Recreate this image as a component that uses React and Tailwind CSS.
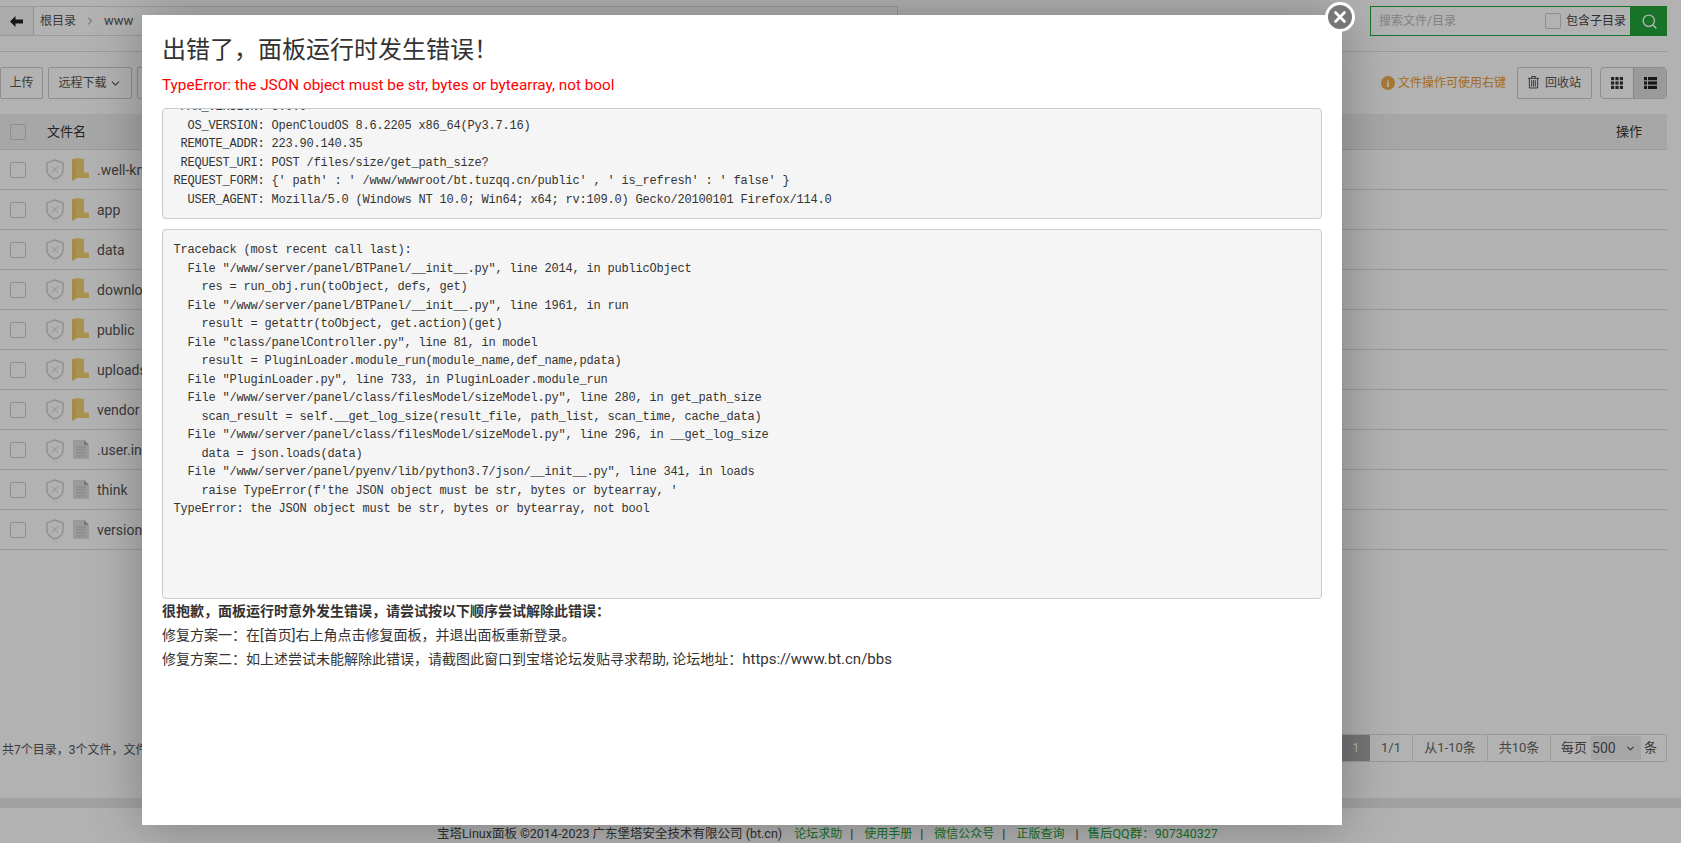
import { Search, ChevronDown, ChevronRight, X } from "lucide-react";

const files = [
  { name: ".well-known", dir: true },
  { name: "app", dir: true },
  { name: "data", dir: true },
  { name: "download", dir: true },
  { name: "public", dir: true },
  { name: "uploads", dir: true },
  { name: "vendor", dir: true },
  { name: ".user.ini", dir: false },
  { name: "think", dir: false },
  { name: "version", dir: false },
];

const envLines = [
  " PAN_VERSION: 8.0.0",
  "  OS_VERSION: OpenCloudOS 8.6.2205 x86_64(Py3.7.16)",
  " REMOTE_ADDR: 223.90.140.35",
  " REQUEST_URI: POST /files/size/get_path_size?",
  "REQUEST_FORM: {' path' : ' /www/wwwroot/bt.tuzqq.cn/public' , ' is_refresh' : ' false' }",
  "  USER_AGENT: Mozilla/5.0 (Windows NT 10.0; Win64; x64; rv:109.0) Gecko/20100101 Firefox/114.0",
];

const traceLines = [
  "Traceback (most recent call last):",
  '  File "/www/server/panel/BTPanel/__init__.py", line 2014, in publicObject',
  "    res = run_obj.run(toObject, defs, get)",
  '  File "/www/server/panel/BTPanel/__init__.py", line 1961, in run',
  "    result = getattr(toObject, get.action)(get)",
  '  File "class/panelController.py", line 81, in model',
  "    result = PluginLoader.module_run(module_name,def_name,pdata)",
  '  File "PluginLoader.py", line 733, in PluginLoader.module_run',
  '  File "/www/server/panel/class/filesModel/sizeModel.py", line 280, in get_path_size',
  "    scan_result = self.__get_log_size(result_file, path_list, scan_time, cache_data)",
  '  File "/www/server/panel/class/filesModel/sizeModel.py", line 296, in __get_log_size',
  "    data = json.loads(data)",
  '  File "/www/server/panel/pyenv/lib/python3.7/json/__init__.py", line 341, in loads',
  "    raise TypeError(f'the JSON object must be str, bytes or bytearray, '",
  "TypeError: the JSON object must be str, bytes or bytearray, not bool",
];

const ShieldIcon = () => (
  <svg width="18" height="21" viewBox="0 0 18 21" fill="none" stroke="#cfcfcf" className="shrink-0">
    <path d="M9 1 L17 4 V11 C17 15.5 13 18.5 9 20 C5 18.5 1 15.5 1 11 V4 Z" strokeWidth="1.5" />
    <path d="M6 7.5 L12 13.5 M12 7.5 L6 13.5" strokeWidth="1" />
  </svg>
);

const FolderIcon = () => (
  <svg width="17" height="24" viewBox="0 0 17 24" className="shrink-0">
    <path d="M0 1 H9 L11 3 V19 H0 Z" fill="#e2bf62" />
    <path d="M4 0 L12 1 V14 L17 15 V20 H5 L0 23 V2 Z" fill="#f3d271" />
    <path d="M0 2 L4 4 V20 L0 23 Z" fill="#e9c766" />
  </svg>
);

const DocIcon = () => (
  <svg width="16" height="21" viewBox="0 0 16 21" className="shrink-0">
    <path d="M0 1 H11 L16 6 V20 H0 Z" fill="#dedede" />
    <path d="M11 1 L16 6 H11 Z" fill="#a8a8a8" />
    <path d="M3 8 H13 M3 11 H13 M3 14 H13 M3 17 H13" stroke="#bdbdbd" strokeWidth="1" />
  </svg>
);

const Checkbox = () => (
  <span className="block w-4 h-4 border border-[#ccc] rounded-[2px] bg-transparent shrink-0" />
);

const FileRow = ({ file }) => (
  <div className="flex items-center h-10 border-b border-[#ddd] pl-[10px] text-[14px] text-[#555]">
    <Checkbox />
    <span className="ml-5 flex"><ShieldIcon /></span>
    <span className="ml-[8px] w-[17px] flex justify-center">
      {file.dir ? <FolderIcon /> : <DocIcon />}
    </span>
    <span className="ml-[8px] pt-[1px]">{file.name}</span>
  </div>
);

const GridIcon = () => (
  <svg width="12" height="12" viewBox="0 0 12 12" fill="#333">
    {[0, 4.4, 8.8].map((y) =>
      [0, 4.4, 8.8].map((x) => <rect key={`${x}-${y}`} x={x} y={y} width="3.2" height="3.2" />)
    )}
  </svg>
);

const ListIcon = () => (
  <svg width="13" height="12" viewBox="0 0 13 12" fill="#222">
    {[0, 4.4, 8.8].map((y) => (
      <g key={y}>
        <rect x="0" y={y} width="3" height="3.2" />
        <rect x="4" y={y} width="9" height="3.2" />
      </g>
    ))}
  </svg>
);

const TrashIcon = () => (
  <svg width="11" height="14" viewBox="0 0 12 14" fill="none" stroke="#444" strokeWidth="1" className="-mt-[3px]">
    <path d="M0 3 H12 M4 3 V1 H8 V3 M1.5 3 V13.5 H10.5 V3 M4 5 V12 M6 5 V12 M8 5 V12" />
  </svg>
);

const App = () => {
  return (
    <div className="relative w-[1681px] h-[843px] overflow-hidden bg-white font-['Roboto','Noto_Sans_CJK_SC',sans-serif]">
      {/* File panel behind the dialog */}
      <div className="flex flex-col h-full bg-white">
        <div className="pr-[14px] pt-[6px]">
          <div className="flex justify-between h-[30px]">
            <div className="flex w-[898px] border border-[#ddd] border-l-0 h-[30px] text-[12px] text-[#555]">
              <span className="w-[34px] flex items-center justify-center border-r border-[#ccc] bg-[#f5f5f5]">
                <svg width="13" height="11" viewBox="0 0 13 11" fill="#222">
                  <path d="M0 5.5 L5.5 0 V3.5 H13 V7.5 H5.5 V11 Z" />
                </svg>
              </span>
              <span className="ml-[6px] flex items-center">根目录</span>
              <ChevronRight className="w-[12px] h-[12px] my-auto mx-[8px]" strokeWidth={1.5} />
              <span className="flex items-center text-[13px]">www</span>
            </div>
            <div className="flex w-[297px] h-[30px]">
              <div className="flex-1 flex items-center border border-[#20a53a] pl-2">
                <span className="flex-1 text-[12px] text-[#bbb]">搜索文件/目录</span>
                <Checkbox />
                <span className="ml-[5px] mr-[4px] text-[12px] text-[#444]">包含子目录</span>
              </div>
              <span className="w-[36px] bg-[#20a53a] flex items-center justify-center">
                <Search className="w-[17px] h-[17px] text-white" strokeWidth={2} />
              </span>
            </div>
          </div>
          <div className="mt-[15px] border-b border-[#ddd]" />
          <div className="flex justify-between mt-[15px] h-[32px] text-[12px] text-[#555]">
            <div className="flex gap-[5px]">
              <span className="w-[43px] flex items-center justify-center border border-[#ccc] rounded-[2px]">上传</span>
              <span className="w-[84px] flex items-center justify-center gap-[2px] border border-[#ccc] rounded-[2px]">
                远程下载
                <ChevronDown className="w-[13px] h-[13px]" />
              </span>
              <span className="w-[60px] border border-[#ccc] rounded-[2px]" />
            </div>
            <div className="flex items-center">
              <span className="w-[14px] h-[14px] rounded-full bg-[#f0ad4e] text-white text-[11px] leading-[14px] font-bold text-center font-['Liberation_Serif',serif]">i</span>
              <span className="ml-[3px] text-[#ec9a2e] text-[12px]">文件操作可使用右键</span>
              <span className="ml-[11px] w-[75px] h-[32px] flex items-center justify-center gap-[6px] border border-[#ccc] rounded-[2px]">
                <TrashIcon />
                回收站
              </span>
              <div className="ml-[8px] flex h-[32px] w-[67px] border border-[#ccc] rounded-[4px] overflow-hidden">
                <span className="flex-1 flex items-center justify-center"><GridIcon /></span>
                <span className="flex-1 flex items-center justify-center bg-[#ddd] border-l border-[#bbb]"><ListIcon /></span>
              </div>
            </div>
          </div>
          <div className="mt-[15px]">
            <div className="flex items-center h-[36px] bg-[#efefef] border-b border-[#ddd] pl-[10px] pr-[25px] text-[13px] text-[#333]">
              <Checkbox />
              <span className="ml-[21px] flex-1">文件名</span>
              <span>操作</span>
            </div>
            {files.map((file) => (
              <FileRow key={file.name} file={file} />
            ))}
          </div>
          <div className="flex justify-between items-center mt-[184px] h-[28px] text-[12px] text-[#555]">
            <span className="pl-[2px] pt-[3px]">共7个目录，3个文件，文件大小:计算</span>
            <div className="flex h-[28px] border border-[#ddd] text-[13px] text-[#666]">
              <span className="w-[28px] flex items-center justify-center bg-[#aaa] text-white">1</span>
              <span className="w-[43px] flex items-center justify-center border-r border-[#ddd]">1/1</span>
              <span className="w-[75px] flex items-center justify-center border-r border-[#ddd]">从1-10条</span>
              <span className="w-[63px] flex items-center justify-center border-r border-[#ddd]">共10条</span>
              <span className="w-[115px] flex items-center pl-[10px] text-[#555]">
                每页
                <span className="ml-[4px] w-[50px] h-[24px] flex items-center justify-between px-[1px] bg-[#eee] text-[14px]">
                  500
                  <ChevronDown className="w-[11px] h-[11px] mr-[4px]" strokeWidth={2.5} />
                </span>
                <span className="ml-[3px]">条</span>
              </span>
            </div>
          </div>
        </div>
        <div className="mt-[36px] h-[10px] bg-[#e8e8e8]" />
        <div className="mt-[17px] flex justify-center text-[12.5px] leading-[18px] text-[#444] pr-[26px]">
          <span>宝塔Linux面板 ©2014-2023 广东堡塔安全技术有限公司 (bt.cn)</span>
          <span className="ml-3 text-[12px] text-[#20a53a]">论坛求助</span>
          <span className="ml-[8px] mr-[11px]">|</span>
          <span className="text-[12px] text-[#20a53a]">使用手册</span>
          <span className="ml-[8px] mr-[11px]">|</span>
          <span className="text-[12px] text-[#20a53a]">微信公众号</span>
          <span className="ml-[8px] mr-[11px]">|</span>
          <span className="text-[12px] text-[#20a53a]">正版查询</span>
          <span className="ml-[11px] mr-[9px]">|</span>
          <span className="text-[#20a53a]">售后QQ群：907340327</span>
        </div>
      </div>

      {/* Shade over the page */}
      <div className="absolute inset-0 bg-black/30" />

      {/* Error dialog */}
      <div className="absolute left-[142px] top-[15px] w-[1200px] h-[810px] bg-white shadow-[1px_1px_50px_rgba(0,0,0,0.3)] px-5">
        <h1 className="mt-[17px] text-[24px] leading-[36px] text-[#333]">出错了，面板运行时发生错误！</h1>
        <p className="mt-[5px] text-[15.3px] leading-[24px] text-[#f00]">TypeError: the JSON object must be str, bytes or bytearray, not bool</p>
        <div className="mt-[11px] h-[111px] overflow-hidden border border-[#ccc] rounded-[4px] bg-[#f5f5f5] px-[10.5px] font-['Liberation_Mono',monospace] text-[12px] tracking-[-0.2px] leading-[18.5px] text-[#333] whitespace-pre">
          <div className="-mt-[11px]">
            {envLines.map((line) => (
              <div key={line}>{line}</div>
            ))}
          </div>
        </div>
        <div className="mt-[10px] h-[370px] overflow-hidden border border-[#ccc] rounded-[4px] bg-[#f5f5f5] px-[10.5px] pt-[11px] font-['Liberation_Mono',monospace] text-[12px] tracking-[-0.2px] leading-[18.5px] text-[#333] whitespace-pre">
          {traceLines.map((line) => (
            <div key={line}>{line}</div>
          ))}
        </div>
        <p className="mt-[1px] text-[14px] leading-[22px] font-bold text-[#333]">很抱歉，面板运行时意外发生错误，请尝试按以下顺序尝试解除此错误：</p>
        <p className="mt-[2px] text-[14px] leading-[22px] text-[#333]">修复方案一：在[首页]右上角点击修复面板，并退出面板重新登录。</p>
        <p className="mt-[2px] text-[14px] leading-[22px] text-[#333]">修复方案二：如上述尝试未能解除此错误，请截图此窗口到宝塔论坛发贴寻求帮助, 论坛地址：<span className="text-[15px]">https://www.bt.cn/bbs</span></p>
      </div>

      {/* Close button sits on the dialog corner */}
      <span className="absolute left-[1325px] top-[2px] w-[30px] h-[30px] rounded-full bg-[#777] border-[3px] border-white flex items-center justify-center">
        <X className="w-[18px] h-[18px] text-white" strokeWidth={3.5} />
      </span>
    </div>
  );
};

export default App;
